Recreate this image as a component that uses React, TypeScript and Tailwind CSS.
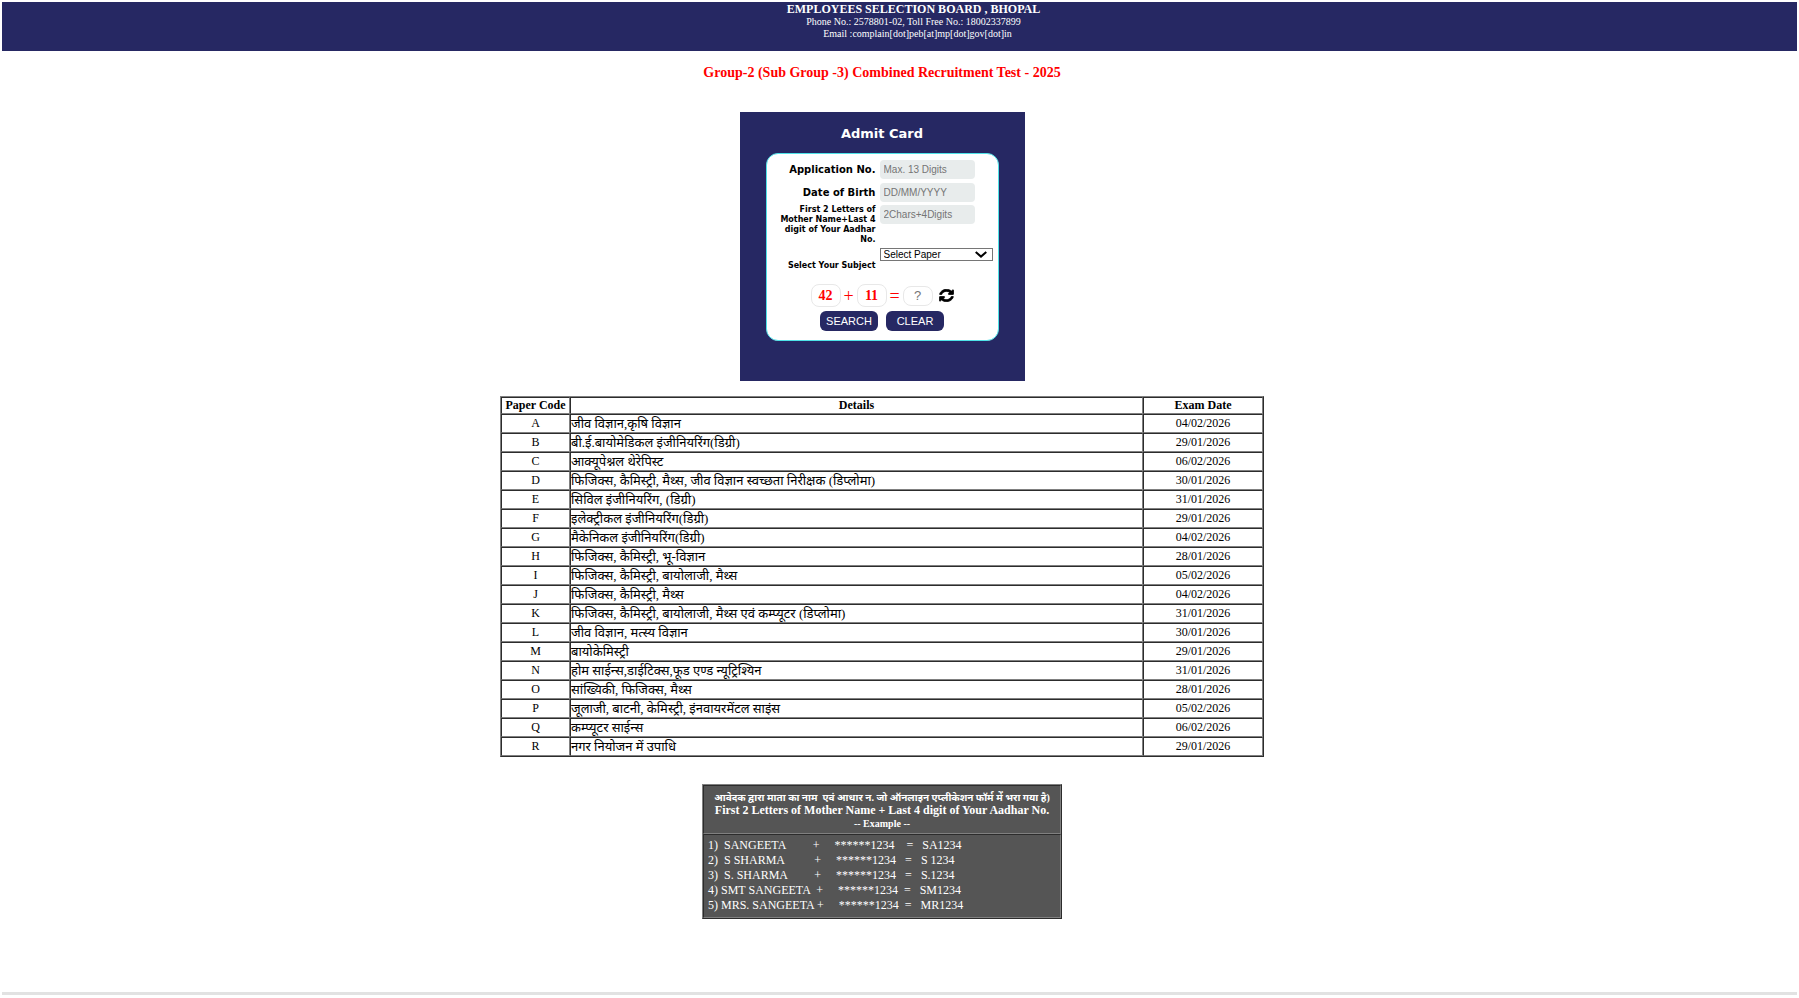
import React, { useState } from 'react';

interface Paper {
    code: string;
    details: string;
    examDate: string;
}

const papers: Paper[] = [
    { code: 'A', details: 'जीव विज्ञान,कृषि विज्ञान', examDate: '04/02/2026' },
    { code: 'B', details: 'बी.ई.बायोमेडिकल इंजीनियरिंग(डिग्री)', examDate: '29/01/2026' },
    { code: 'C', details: 'आक्यूपेश्नल थेरेपिस्ट', examDate: '06/02/2026' },
    { code: 'D', details: 'फिजिक्स, कैमिस्ट्री, मैथ्स, जीव विज्ञान स्वच्छता निरीक्षक (डिप्लोमा)', examDate: '30/01/2026' },
    { code: 'E', details: 'सिविल इंजीनियरिंग, (डिग्री)', examDate: '31/01/2026' },
    { code: 'F', details: 'इलेक्ट्रीकल इंजीनियरिंग(डिग्री)', examDate: '29/01/2026' },
    { code: 'G', details: 'मैकेनिकल इंजीनियरिंग(डिग्री)', examDate: '04/02/2026' },
    { code: 'H', details: 'फिजिक्स, कैमिस्ट्री, भू-विज्ञान', examDate: '28/01/2026' },
    { code: 'I', details: 'फिजिक्स, कैमिस्ट्री, बायोलाजी, मैथ्स', examDate: '05/02/2026' },
    { code: 'J', details: 'फिजिक्स, कैमिस्ट्री, मैथ्स', examDate: '04/02/2026' },
    { code: 'K', details: 'फिजिक्स, कैमिस्ट्री, बायोलाजी, मैथ्स एवं कम्प्यूटर (डिप्लोमा)', examDate: '31/01/2026' },
    { code: 'L', details: 'जीव विज्ञान, मत्स्य विज्ञान', examDate: '30/01/2026' },
    { code: 'M', details: 'बायोकेमिस्ट्री', examDate: '29/01/2026' },
    { code: 'N', details: 'होम साईन्स,डाईटिक्स,फूड एण्ड न्यूट्रिश्यिन', examDate: '31/01/2026' },
    { code: 'O', details: 'सांख्यिकी, फिजिक्स, मैथ्स', examDate: '28/01/2026' },
    { code: 'P', details: 'जूलाजी, बाटनी, केमिस्ट्री, इंनवायरमेंटल साइंस', examDate: '05/02/2026' },
    { code: 'Q', details: 'कम्प्यूटर साईन्स', examDate: '06/02/2026' },
    { code: 'R', details: 'नगर नियोजन में उपाधि', examDate: '29/01/2026' },
];

// spacing inside each line is significant, rendered with whitespace-pre
const examples = [
    '1)  SANGEETA         +     ******1234    =   SA1234',
    '2)  S SHARMA          +     ******1234   =   S 1234',
    '3)  S. SHARMA         +     ******1234   =   S.1234',
    '4) SMT SANGEETA  +     ******1234  =   SM1234',
    '5) MRS. SANGEETA +     ******1234  =   MR1234',
];

const cell = 'border border-t-[#2c2c2c] border-l-[#2c2c2c] border-r-[#808080] border-b-[#808080]';
const field = "block w-[95px] h-[19px] rounded-[4px] bg-[#e8ecec] px-1 font-['Liberation_Sans',sans-serif] text-[10px] font-normal text-black placeholder:text-[#757575] outline-none";
const captchaBox = 'w-[30px] rounded-[8px] border border-[#e8e8e8] text-center';
const button = 'w-[58px] h-5 rounded-[6px] bg-[#262863] text-[11px] leading-5 text-white cursor-pointer hover:bg-[#3a3d85]';

const RefreshIcon = () => (
    <svg className="w-[15px] h-[13px]" viewBox="-40 -40 1616 1616" preserveAspectRatio="none" fill="currentColor" stroke="currentColor" strokeWidth="90" aria-hidden="true">
        <path d="M1511 928q0 5-1 7-64 268-268 434.5t-478 166.5q-146 0-282.5-55t-243.5-157l-129 129q-19 19-45 19t-45-19-19-45v-448q0-26 19-45t45-19h448q26 0 45 19t19 45-19 45l-137 137q71 66 161 102t187 36q134 0 250-65t186-179q11-17 53-117 8-23 30-23h192q13 0 22.5 9.5t9.5 22.5zm25-800v448q0 26-19 45t-45 19h-448q-26 0-45-19t-19-45 19-45l138-138q-148-137-349-137-134 0-250 65t-186 179q-11 17-53 117-8 23-30 23h-199q-13 0-22.5-9.5t-9.5-22.5v-7q65-268 270-434.5t480-166.5q146 0 284 55.5t245 156.5l130-129q19-19 45-19t45 19 19 45z" />
    </svg>
);

const AdmitCardForm: React.FC = () => {
    const [numbers, setNumbers] = useState([42, 11]);

    const refreshCaptcha = () => {
        setNumbers([10 + Math.floor(Math.random() * 80), 10 + Math.floor(Math.random() * 80)]);
    };

    return (
        <section className="w-[285px] bg-[#262863] px-[26px] pt-3 pb-10">
            <h2 className="font-['DejaVu_Sans',sans-serif] text-[13px] leading-5 font-bold text-white text-center">Admit Card</h2>
            <form
                className="mt-[9px] rounded-[12px] border border-[#4fe3e8] bg-white pt-[6px] pb-[9px] font-['Liberation_Sans',sans-serif]"
                onSubmit={e => e.preventDefault()}
            >
                <div className="grid grid-cols-[109px_1fr] gap-x-1 font-bold text-right font-['DejaVu_Sans',sans-serif]">
                    <label htmlFor="app-no" className="h-[23px] text-[10px] leading-[19px]">Application No.</label>
                    <div className="text-left"><input id="app-no" maxLength={13} placeholder="Max. 13 Digits" className={field} /></div>
                    <label htmlFor="dob" className="h-[22px] text-[10px] leading-[19px]">Date of Birth</label>
                    <div className="text-left"><input id="dob" placeholder="DD/MM/YYYY" className={field} /></div>
                    <label htmlFor="mother" className="h-[43px] pl-3 text-[8px] leading-[10px]">First 2 Letters of Mother Name+Last 4 digit of Your Aadhar No.</label>
                    <div className="text-left"><input id="mother" placeholder="2Chars+4Digits" className={field} /></div>
                    <label htmlFor="subject" className="h-9 pt-[13px] text-[8px] leading-[10px]">Select Your Subject</label>
                    <div className="relative w-[113px] h-[13px] text-left">
                        <select id="subject" className="block w-full h-[13px] appearance-none border border-[#767676] bg-white pl-[3px] font-['Liberation_Sans',sans-serif] text-[10px] leading-[11px] font-normal text-black">
                            <option>Select Paper</option>
                        </select>
                        <svg className="pointer-events-none absolute right-[6px] top-[3px] w-3 h-[7px]" viewBox="0 0 12 7" fill="none" stroke="black" strokeWidth="2">
                            <path d="M0.7 1L6 5.6 11.3 1" />
                        </svg>
                    </div>
                </div>
                <div className="flex items-center justify-center font-['Liberation_Serif',serif] text-[#ff0000]">
                    <span className={`${captchaBox} h-[23px] text-[14px] leading-[21px] font-bold`}>{numbers[0]}</span>
                    <span className="w-4 text-center text-[18px] leading-5">+</span>
                    <span className={`${captchaBox} h-[23px] text-[14px] leading-[21px] font-bold`}>{numbers[1]}</span>
                    <span className="w-4 text-center text-[18px] leading-5">=</span>
                    <input aria-label="Captcha answer" placeholder="?" className={`${captchaBox} h-5 font-['Liberation_Sans',sans-serif] text-[13px] text-black placeholder:text-[#757575] outline-none`} />
                    <button type="button" aria-label="Refresh" onClick={refreshCaptcha} className="ml-[6px] text-black cursor-pointer">
                        <RefreshIcon />
                    </button>
                </div>
                <div className="mt-1 flex justify-center gap-2">
                    <button type="submit" className={button}>SEARCH</button>
                    <button type="reset" className={button}>CLEAR</button>
                </div>
            </form>
        </section>
    );
};

const App: React.FC = () => {
    return (
        <div className="p-[2px] bg-white text-black font-['Liberation_Serif','Noto_Sans',serif]">
            <header className="h-[49px] bg-[#262863] pl-7 text-center text-white">
                <h1 className="text-[12px] leading-[14px] font-bold">EMPLOYEES SELECTION BOARD , BHOPAL</h1>
                <p className="text-[10px] leading-3">Phone No.: 2578801-02, Toll Free No.: 18002337899</p>
                <p className="text-[10px] leading-3 pl-2">Email :complain[dot]peb[at]mp[dot]gov[dot]in</p>
            </header>

            <main className="flex flex-col items-center pr-[35px]">
                <h2 className="mt-3 text-[14px] leading-5 font-bold text-[#ff0000]">Group-2 (Sub Group -3) Combined Recruitment Test - 2025</h2>

                <div className="mt-[29px]">
                    <AdmitCardForm />
                </div>

                <table className="mt-[15px] w-[764px] table-fixed border-separate border-spacing-0 border border-t-[#808080] border-l-[#808080] border-r-[#2c2c2c] border-b-[#2c2c2c] text-[12px] leading-[15px]">
                    <thead>
                        <tr className="h-[17px]">
                            <th className={`${cell} w-[69px] p-0`}>Paper Code</th>
                            <th className={`${cell} p-0`}>Details</th>
                            <th className={`${cell} w-[120px] p-0`}>Exam Date</th>
                        </tr>
                    </thead>
                    <tbody>
                        {papers.map(paper => (
                            <tr key={paper.code} className="h-[19px] text-center">
                                <td className={`${cell} p-0`}>{paper.code}</td>
                                <td className={`${cell} p-0 text-left text-[13px] leading-[15px] whitespace-nowrap`}>{paper.details}</td>
                                <td className={`${cell} p-0`}>{paper.examDate}</td>
                            </tr>
                        ))}
                    </tbody>
                </table>

                <section className="mt-[27px] w-[360px] border border-t-[#808080] border-l-[#808080] border-r-[#2c2c2c] border-b-[#2c2c2c] bg-[#555555] text-[12px] text-white">
                    <div className={`${cell} h-[49px] pt-[5px] text-center font-bold`}>
                        <p className="text-[10px] leading-[13px] whitespace-pre">आवेदक द्वारा माता का नाम  एवं आधार न. जो ऑनलाइन एप्लीकेशन फॉर्म में भरा गया है)</p>
                        <p className="leading-[13px]">First 2 Letters of Mother Name + Last 4 digit of Your Aadhar No.</p>
                        <p className="text-[10px] leading-[13px]">-- Example --</p>
                    </div>
                    <div className={`${cell} px-1 pt-[3px] pb-1 leading-[15px] whitespace-pre`}>
                        {examples.map(line => (
                            <p key={line}>{line}</p>
                        ))}
                    </div>
                </section>
            </main>

            <hr className="mt-[73px] border-t-[3px] border-[#e2e2e2]" />
        </div>
    );
};

export default App;
